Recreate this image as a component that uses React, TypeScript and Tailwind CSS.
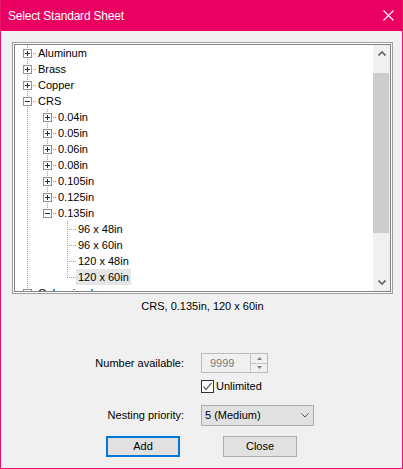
import React from "react";

type Row = {
  label: string;
  level: number;
  guides: boolean[];
  hasNext: boolean;
  box: "plus" | "minus" | null;
  selected?: boolean;
};

const rows: Row[] = [
  { label: "Aluminum", level: 0, guides: [], hasNext: true, box: "plus" },
  { label: "Brass", level: 0, guides: [], hasNext: true, box: "plus" },
  { label: "Copper", level: 0, guides: [], hasNext: true, box: "plus" },
  { label: "CRS", level: 0, guides: [], hasNext: true, box: "minus" },
  { label: "0.04in", level: 1, guides: [true], hasNext: true, box: "plus" },
  { label: "0.05in", level: 1, guides: [true], hasNext: true, box: "plus" },
  { label: "0.06in", level: 1, guides: [true], hasNext: true, box: "plus" },
  { label: "0.08in", level: 1, guides: [true], hasNext: true, box: "plus" },
  { label: "0.105in", level: 1, guides: [true], hasNext: true, box: "plus" },
  { label: "0.125in", level: 1, guides: [true], hasNext: true, box: "plus" },
  { label: "0.135in", level: 1, guides: [true], hasNext: false, box: "minus" },
  { label: "96 x 48in", level: 2, guides: [true, false], hasNext: true, box: null },
  { label: "96 x 60in", level: 2, guides: [true, false], hasNext: true, box: null },
  { label: "120 x 48in", level: 2, guides: [true, false], hasNext: true, box: null },
  { label: "120 x 60in", level: 2, guides: [true, false], hasNext: false, box: null, selected: true },
  { label: "Galvanized", level: 0, guides: [], hasNext: true, box: "plus" },
];

const DOT = "#a0a0a0";

function GuideCell({ on }: { on: boolean }) {
  return (
    <svg width="20" height="16" className="shrink-0 block" shapeRendering="crispEdges">
      {on && <line x1="11.5" y1="0" x2="11.5" y2="16" stroke={DOT} strokeDasharray="1 1" />}
    </svg>
  );
}

function NodeCell({ hasNext, box }: { hasNext: boolean; box: "plus" | "minus" | null }) {
  return (
    <svg width="20" height="16" className="shrink-0 block" shapeRendering="crispEdges">
      <line x1="11.5" y1="0" x2="11.5" y2={hasNext ? 16 : 9} stroke={DOT} strokeDasharray="1 1" />
      <line x1={box ? 17 : 11} y1="8.5" x2="20" y2="8.5" stroke={DOT} strokeDasharray="1 1" />
      {box && (
        <g>
          <rect x="7.5" y="4.5" width="8" height="8" fill="#ffffff" stroke="#919191" />
          <line x1="9" y1="8.5" x2="14" y2="8.5" stroke="#1f2f4f" />
          {box === "plus" && <line x1="11.5" y1="6" x2="11.5" y2="11" stroke="#1f2f4f" />}
        </g>
      )}
    </svg>
  );
}

function TreeRow({ row }: { row: Row }) {
  return (
    <div className="flex h-[16px] items-stretch shrink-0">
      {row.guides.map((g, i) => (
        <GuideCell key={i} on={g} />
      ))}
      <NodeCell hasNext={row.hasNext} box={row.box} />
      <div
        className={
          "px-[2px] leading-[16px] whitespace-nowrap text-black " +
          (row.selected ? "bg-[#e6e6e6]" : "")
        }
      >
        {row.label}
      </div>
    </div>
  );
}

function Chevron({ up }: { up: boolean }) {
  return (
    <svg width="8" height="5">
      {up ? (
        <polyline points="0.5,4.5 4,1 7.5,4.5" fill="none" stroke="#606060" strokeWidth="1.6" />
      ) : (
        <polyline points="0.5,0.5 4,4 7.5,0.5" fill="none" stroke="#606060" strokeWidth="1.6" />
      )}
    </svg>
  );
}

export default function App() {
  return (
    <div className="w-[403px] h-[469px] bg-[#f0f0f0] border-l border-r border-b border-[#e8126a] flex flex-col font-['Liberation_Sans',Arial,sans-serif] text-[11px] text-black overflow-hidden">
      {/* title bar */}
      <div className="h-[31px] shrink-0 bg-[#ea0060] flex items-center justify-between pl-[8px] pr-[9px] -mx-px">
        <span className="text-white text-[12px] tracking-[-0.2px]">Select Standard Sheet</span>
        <svg width="11" height="11" viewBox="0 0 11 11">
          <line x1="0.5" y1="0.5" x2="10.5" y2="10.5" stroke="#ffffff" strokeWidth="1.1" />
          <line x1="10.5" y1="0.5" x2="0.5" y2="10.5" stroke="#ffffff" strokeWidth="1.1" />
        </svg>
      </div>

      {/* body */}
      <div className="flex flex-col pl-[11px]">
        {/* tree box */}
        <div className="mt-[11px] w-[381px] h-[252px] border border-[#a0a0a0] bg-white p-px">
          <div className="w-full h-full border border-[#828282] flex overflow-hidden">
            <div className="flex-1 bg-white overflow-hidden flex flex-col pl-px">
              {rows.map((r, i) => (
                <TreeRow key={i} row={r} />
              ))}
            </div>
            <div className="w-[17px] shrink-0 bg-[#f0f0f0] flex flex-col">
              <div className="h-[17px] flex items-center justify-center shrink-0">
                <Chevron up />
              </div>
              <div className="h-[11px] shrink-0" />
              <div className="h-[160px] shrink-0 bg-[#cdcdcd] mr-px" />
              <div className="flex-1" />
              <div className="h-[17px] flex items-center justify-center shrink-0">
                <Chevron up={false} />
              </div>
            </div>
          </div>
        </div>

        {/* status */}
        <div className="mt-[5px] h-[14px] leading-[14px] w-[381px] text-center">
          CRS, 0.135in, 120 x 60in
        </div>

        {/* number available */}
        <div className="mt-[40px] h-[20px] flex items-center">
          <div className="w-[172px] text-right">Number available:</div>
          <div className="ml-[17px] w-[67px] h-[20px] border border-[#bcbcbc] bg-[#f0f0f0] flex">
            <div className="flex-1 pl-[8px] leading-[18px] text-[#7a7a7a]">9999</div>
            <div className="w-[17px] border-l border-[#c8c8c8] flex flex-col">
              <div className="flex-1 border-b border-[#c8c8c8] flex items-center justify-center">
                <svg width="5" height="3">
                  <polygon points="0,3 2.5,0 5,3" fill="#808080" />
                </svg>
              </div>
              <div className="flex-1 flex items-center justify-center">
                <svg width="5" height="3">
                  <polygon points="0,0 2.5,3 5,0" fill="#808080" />
                </svg>
              </div>
            </div>
          </div>
        </div>

        {/* unlimited */}
        <div className="mt-[7px] h-[13px] flex items-center">
          <div className="ml-[189px] w-[13px] h-[13px] border border-[#333333] bg-white flex items-center justify-center">
            <svg width="11" height="11" viewBox="0 0 11 11">
              <polyline points="1.5,5.5 4,8.5 9.5,2" fill="none" stroke="#333333" strokeWidth="1.1" />
            </svg>
          </div>
          <span className="ml-[2px] leading-[13px]">Unlimited</span>
        </div>

        {/* nesting priority */}
        <div className="mt-[12px] h-[21px] flex items-center">
          <div className="w-[172px] text-right">Nesting priority:</div>
          <div className="ml-[17px] w-[113px] h-[21px] border border-[#adadad] bg-[#e1e1e1] flex items-center justify-between pl-[3px] pr-[4px]">
            <span>5 (Medium)</span>
            <svg width="8" height="5" viewBox="0 0 8 5">
              <polyline points="0.5,0.5 4,4 7.5,0.5" fill="none" stroke="#555555" strokeWidth="1" />
            </svg>
          </div>
        </div>

        {/* buttons */}
        <div className="mt-[10px] h-[21px] flex">
          <button className="ml-[94px] w-[74px] h-[21px] border-2 border-[#0078d7] bg-[#e1e1e1] flex items-center justify-center text-[11px]">
            Add
          </button>
          <button className="ml-[43px] w-[74px] h-[21px] border border-[#adadad] bg-[#e1e1e1] flex items-center justify-center text-[11px]">
            Close
          </button>
        </div>
      </div>
    </div>
  );
}
